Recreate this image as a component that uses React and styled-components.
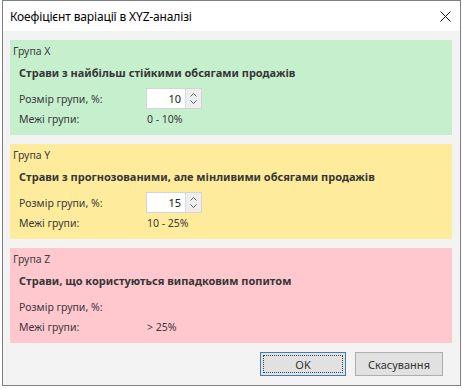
import React from "react";
import styled, { createGlobalStyle } from "styled-components";

const Global = createGlobalStyle`
  html, body { margin: 0; padding: 0; background: #ffffff; }
  body { font-family: "Noto Sans", "Open Sans", sans-serif; }
`;

const Screen = styled.div`
  width: 462px;
  height: 389px;
  background: #ffffff;
  overflow: hidden;
`;

const Dialog = styled.div`
  margin-left: 2px;
  width: 459px;
  height: 386px;
  box-sizing: border-box;
  border: 1px solid #7f7f7f;
  display: flex;
  flex-direction: column;
  background: #f3f3f3;
`;

const TitleBar = styled.div`
  height: 30px;
  flex: none;
  background: #ffffff;
  display: flex;
  align-items: center;
  justify-content: space-between;
  padding: 0 9px 0 7px;
`;

const Title = styled.div`
  font-size: 12px;
  color: #000000;
  letter-spacing: -0.15px;
  padding-top: 1px;
`;

const Close = styled.div`
  width: 12px;
  height: 12px;
  display: flex;
  align-items: center;
  justify-content: center;
`;

const Client = styled.div`
  flex: 1;
  display: flex;
  flex-direction: column;
  gap: 9px;
  padding: 9px 8px 0 7px;
`;

const Panel = styled.div`
  height: 95px;
  background: ${(p) => p.$bg};
  box-sizing: border-box;
  padding: 3px 0 0 3px;
  color: #3a3a3a;
`;

const GroupLabel = styled.div`
  font-size: 10.5px;
  line-height: 16px;
  height: 16px;
  color: #404040;
`;

const Heading = styled.div`
  margin: 5px 0 0 6px;
  font-size: 11px;
  font-weight: bold;
  line-height: 18px;
  height: 18px;
  color: #363636;
`;

const Grid = styled.div`
  margin: 6px 0 0 6px;
  display: grid;
  grid-template-columns: 127px auto;
  grid-template-rows: 21px 18px;
  align-items: center;
  row-gap: 1px;
  font-size: 10.5px;
  color: #3a3a3a;
`;

const Spin = styled.div`
  display: flex;
  width: 56px;
  height: 21px;
  box-sizing: border-box;
  border: 1px solid #d4d4d4;
  background: #ffffff;
`;

const SpinValue = styled.div`
  flex: 1;
  text-align: right;
  padding-right: 4px;
  font-size: 11px;
  line-height: 19px;
  color: #222222;
`;

const SpinButtons = styled.div`
  width: 15px;
  border-left: 1px solid #dcdcdc;
  background: #eeeeee;
  display: flex;
  flex-direction: column;
  align-items: center;
  justify-content: center;
  gap: 3px;
`;

const Value = styled.div`
  padding-left: 1px;
`;

const Footer = styled.div`
  display: flex;
  justify-content: flex-end;
  gap: 9px;
  padding: 0 9px 0 0;
`;

const Button = styled.div`
  width: ${(p) => p.$w}px;
  height: 24px;
  box-sizing: border-box;
  border: 1px solid ${(p) => (p.$focus ? "#3c7fb1" : "#adadad")};
  background: #e1e1e1;
  display: flex;
  align-items: center;
  justify-content: center;
  font-size: 11px;
  color: #333333;
  position: relative;
`;

const FocusRing = styled.div`
  position: absolute;
  inset: 2px;
  border: 1px dotted #444444;
`;

const Chevron = ({ up }) => (
  <svg width="7" height="4" viewBox="0 0 7 4">
    <path
      d={up ? "M0.5 3.5 L3.5 0.5 L6.5 3.5" : "M0.5 0.5 L3.5 3.5 L6.5 0.5"}
      fill="none"
      stroke="#606060"
      strokeWidth="1"
    />
  </svg>
);

const groups = [
  {
    name: "Група X",
    bg: "#c6efce",
    heading: "Страви з найбільш стійкими обсягами продажів",
    value: "10",
    range: "0 - 10%",
  },
  {
    name: "Група Y",
    bg: "#ffeb9c",
    heading: "Страви з прогнозованими, але мінливими обсягами продажів",
    value: "15",
    range: "10 - 25%",
  },
  {
    name: "Група Z",
    bg: "#ffc7ce",
    heading: "Страви, що користуються випадковим попитом",
    value: null,
    range: "> 25%",
  },
];

export default function App() {
  return (
    <Screen>
      <Global />
      <Dialog>
        <TitleBar>
          <Title>Коефіцієнт варіації в XYZ-аналізі</Title>
          <Close>
            <svg width="11" height="11" viewBox="0 0 11 11">
              <path d="M0.5 0.5 L10.5 10.5 M10.5 0.5 L0.5 10.5" stroke="#111" strokeWidth="1" />
            </svg>
          </Close>
        </TitleBar>
        <Client>
          {groups.map((g) => (
            <Panel key={g.name} $bg={g.bg}>
              <GroupLabel>{g.name}</GroupLabel>
              <Heading>{g.heading}</Heading>
              <Grid>
                <div>Розмір групи, %:</div>
                <div>
                  {g.value !== null && (
                    <Spin>
                      <SpinValue>{g.value}</SpinValue>
                      <SpinButtons>
                        <Chevron up />
                        <Chevron />
                      </SpinButtons>
                    </Spin>
                  )}
                </div>
                <div>Межі групи:</div>
                <Value>{g.range}</Value>
              </Grid>
            </Panel>
          ))}
          <Footer>
            <Button $w={86} $focus>
              <FocusRing />
              OK
            </Button>
            <Button $w={88}>Скасування</Button>
          </Footer>
        </Client>
      </Dialog>
    </Screen>
  );
}
